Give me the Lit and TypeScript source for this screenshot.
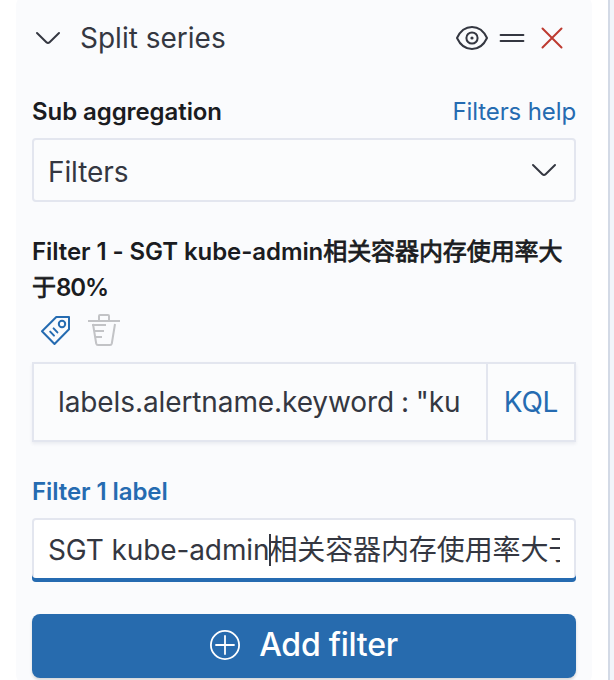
import { LitElement, html, css, svg } from "lit";
import { customElement } from "lit/decorators.js";

const icon = (cls: string, size: number, body: unknown) =>
  html`<svg class="icon ${cls}" width=${size} height=${size} viewBox="0 0 ${size} ${size}" aria-hidden="true">${body}</svg>`;

const chevron = svg`<path d="M5 11 14.4 20.2Q16 21.7 17.6 20.2L27 11" />`;
const eye = svg`<path d="M1 16C4 9.6 9.4 5 16 5S28 9.6 31 16C28 22.4 22.6 27 16 27S4 22.4 1 16Z" /><circle cx="16" cy="16" r="5.6" /><circle class="dot" cx="16" cy="16" r="1.6" />`;
const grab = svg`<path d="M4.6 13H27.4M4.6 19H27.4" />`;
const cross = svg`<path d="M6.5 6.5 25.5 25.5M25.5 6.5 6.5 25.5" />`;
const tag = svg`<path d="M16.3 3H29V15.2L14.5 30 2 17.3Z" /><circle cx="22" cy="10" r="3.2" /><path d="M10.2 17.6 14 21.6M13.6 14.4 17.4 18.4" />`;
const trash = svg`<path d="M0 7H32M11 7V2Q11 1 12 1H20Q21 1 21 2V7M5 10 8.2 29.5Q8.5 31 10 31H22Q23.5 31 23.8 29.5L27 10M4 11H18M6.4 17H16M7.4 23H14" />`;
const plus = svg`<circle cx="16" cy="16" r="14.1" /><path d="M16 7V25M7 16H25" />`;

@customElement("app-root")
export class AppRoot extends LitElement {
  static styles = css`
    :host {
      display: flex;
      box-sizing: border-box;
      width: 614px;
      height: 680px;
      overflow: hidden;
      background: #f1f4fa;
      color: #343741;
      font-family: Inter, "Noto Sans CJK SC", sans-serif;
      font-size: 28px;
      line-height: 40px;
      letter-spacing: 0;
      -webkit-font-smoothing: antialiased;
    }
    * { box-sizing: border-box; }
    .pane {
      width: 610px;
      padding: 0 16px;
      background: #fff;
      border-right: 2px solid #d3dae6;
    }
    .panel {
      display: flex;
      flex-direction: column;
      height: 692px;
      margin-top: -6px;
      padding: 24px 16px 0;
      border-radius: 12px;
      background: #fafbfd;
    }
    .icon {
      display: block;
      flex: none;
      fill: none;
      stroke: currentColor;
      stroke-width: 2;
      stroke-linecap: round;
      stroke-linejoin: round;
    }
    .dot { fill: currentColor; stroke: none; }
    .header { display: flex; align-items: center; height: 40px; }
    .title { flex: 1; margin-left: 16px; }
    .tools { display: flex; gap: 8px; margin-right: 8px; }
    .danger { color: #bd3a30; }
    .labelrow {
      display: flex;
      justify-content: space-between;
      align-items: center;
      height: 36px;
      margin-top: 36px;
    }
    .label {
      color: #1a1c21;
      font-size: 24px;
      font-weight: 600;
      line-height: 36px;
      letter-spacing: -0.08px;
    }
    .cjk { font-weight: 400; -webkit-text-stroke: 0.8px currentColor; }
    .tight { letter-spacing: -1px; }
    .link { color: #256bb1; font-size: 24px; letter-spacing: -0.12px; }
    .field {
      display: flex;
      align-items: center;
      border: 2px solid #e3e6ef;
      background: #fbfcfd;
    }
    .select {
      height: 64px;
      margin-top: 8px;
      padding: 0 14px;
      border-radius: 4px;
      justify-content: space-between;
    }
    .selected { padding-top: 3px; letter-spacing: -0.1px; }
    .filter { height: 72px; margin-top: 32px; }
    .actions { display: flex; gap: 16px; margin: 8px 0 0 8px; }
    .tag { color: #256bb1; }
    .trash { color: #c2c3c6; stroke-linecap: butt; }
    .query {
      height: 80px;
      margin-top: 16px;
      box-shadow: 0 2px 3px rgba(50, 60, 100, 0.08);
    }
    .querytext {
      width: 404px;
      margin-left: 24px;
      overflow: hidden;
      white-space: nowrap;
      letter-spacing: -0.1px;
      word-spacing: -0.9px;
    }
    .kql {
      display: flex;
      align-items: center;
      justify-content: center;
      width: 88px;
      height: 76px;
      margin-left: auto;
      border-left: 2px solid #e3e6ef;
      color: #256bb1;
      letter-spacing: -0.2px;
    }
    .active { margin-top: 32px; color: #256bb1; }
    .input {
      height: 64px;
      margin-top: 8px;
      padding: 0 16px;
      border: 0;
      border-radius: 4px;
      background: #fff;
      box-shadow: inset 0 -4px 0 #256bb1, inset 0 0 0 2px #e3e6ef;
      letter-spacing: -0.11px;
    }
    .value { display: flex; align-items: center; flex: 1; overflow: hidden; white-space: nowrap; }
    .caret { flex: none; width: 2px; height: 32px; margin-right: -2px; background: #343741; }
    .add {
      display: flex;
      align-items: center;
      justify-content: center;
      gap: 18px;
      height: 64px;
      padding: 0 1px 2px 0;
      margin-top: 32px;
      border-radius: 8px;
      background: #276bae;
      box-shadow: 0 2px 3px rgba(0, 0, 0, 0.15);
      color: #fff;
      font-size: 32px;
      font-weight: 500;
      letter-spacing: -0.24px;
    }
    .plus { stroke-width: 1.8; }
  `;

  render() {
    return html`
      <div class="pane">
        <section class="panel">
          <div class="header">
            ${icon("", 32, chevron)}
            <span class="title">Split series</span>
            <div class="tools">
              ${icon("", 32, eye)} ${icon("", 32, grab)} ${icon("danger", 32, cross)}
            </div>
          </div>
          <div class="labelrow">
            <span class="label">Sub aggregation</span>
            <span class="link">Filters help</span>
          </div>
          <div class="field select"><span class="selected">Filters</span>${icon("", 32, chevron)}</div>
          <div class="label filter">Filter 1 - SGT kube-admin<span class="cjk">相关容器内存使用率大于</span><span class="tight">80%</span></div>
          <div class="actions">${icon("tag", 32, tag)} ${icon("trash", 32, trash)}</div>
          <div class="field query">
            <span class="querytext">labels.alertname.keyword : "kube-admin"</span>
            <span class="kql">KQL</span>
          </div>
          <div class="label active">Filter 1 label</div>
          <div class="field input">
            <div class="value">
              <span>SGT kube-admin</span><i class="caret"></i><span>相关容器内存使用率大于80%</span>
            </div>
          </div>
          <div class="add">${icon("plus", 32, plus)}<span>Add filter</span></div>
        </section>
      </div>
    `;
  }
}
